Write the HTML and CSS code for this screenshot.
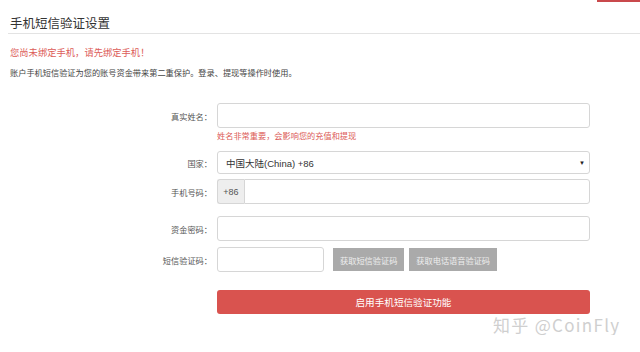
FILE: index.html
```html
<!DOCTYPE html>
<html lang="zh-CN">
<head>
  <meta charset="UTF-8">
  <title>手机短信验证设置</title>
  <link rel="stylesheet" href="styles.css">
</head>
<body>
  <!-- 顶部细条 -->
  <div class="topbar"><span class="topbar-mark"></span></div>
  <div class="panel">
    <h2 class="panel-title">手机短信验证设置</h2>
    <p class="warn-text">您尚未绑定手机，请先绑定手机！</p>
    <p class="desc-text">账户手机短信验证为您的账号资金带来第二重保护。登录、提现等操作时使用。</p>

    <form class="bind-form" onsubmit="return false">
      <div class="form-row row-name">
        <label class="form-label">真实姓名：</label>
        <input class="form-input" type="text">
      </div>
      <div class="form-hint">姓名非常重要，会影响您的充值和提现</div>
      <div class="form-row row-country">
        <label class="form-label">国家：</label>
        <div class="form-select">
          <span>中国大陆(China) +86</span>
          <span class="caret">▼</span>
        </div>
      </div>
      <div class="form-row row-phone">
        <label class="form-label">手机号码：</label>
        <div class="input-group">
          <span class="input-prefix">+86</span>
          <input class="form-input" type="text">
        </div>
      </div>
      <div class="form-row row-fund">
        <label class="form-label">资金密码：</label>
        <input class="form-input" type="password">
      </div>
      <div class="form-row row-sms">
        <label class="form-label">短信验证码：</label>
        <input class="form-input sms-input" type="text">
        <button class="code-btn" type="button">获取短信验证码</button>
        <button class="code-btn" type="button">获取电话语音验证码</button>
      </div>
      <div class="form-row row-submit">
        <span class="form-label"></span>
        <button class="submit-btn" type="submit">启用手机短信验证功能</button>
      </div>
    </form>
    <div class="watermark">知乎 @CoinFly</div>
  </div>
</body>
</html>
```

FILE: styles.css
```css
body {
  margin: 0;
  background: #fff;
  font-family: 'Noto Sans CJK SC', 'Liberation Sans', sans-serif;
  color: #333;
  overflow: hidden;
}
.topbar {
  display: flex;
  justify-content: flex-end;
  height: 2px;
}
.topbar-mark {
  width: 43px;
  background: #c9494c;
}
.panel {
  padding-left: 8px;
}
.panel-title {
  margin: 0;
  padding: 11px 0 0 2px;
  height: 20px;
  line-height: 20px;
  font-size: 12.5px;
  font-weight: 400;
  color: #333;
  border-bottom: 1px solid #e3e3e3;
}
.warn-text {
  margin: 11px 0 0 2px;
  font-size: 9.3px;
  line-height: 14px;
  color: #dc5c58;
}
.desc-text {
  margin: 6px 0 0 2px;
  font-size: 8.2px;
  line-height: 14px;
  color: #444;
}
.bind-form {
  margin-top: 24px;
}
.form-row {
  display: flex;
  align-items: center;
}
.form-label {
  width: 204px;
  flex-shrink: 0;
  padding-right: 5px;
  text-align: right;
  font-size: 8.2px;
  color: #555;
}
.form-input {
  box-sizing: border-box;
  width: 373px;
  height: 25px;
  border: 1px solid #d6d6d6;
  border-radius: 3px;
  padding: 0 8px;
  font-family: inherit;
  font-size: 9px;
  outline: none;
  background: #fff;
}
.form-hint {
  margin: 0 0 0 209px;
  font-size: 8.2px;
  line-height: 14px;
  color: #dc5c58;
}
.row-country { margin-top: 9px; }
.form-select {
  box-sizing: border-box;
  width: 373px;
  height: 23px;
  border: 1px solid #d6d6d6;
  border-radius: 3px;
  padding: 0 4px 0 8px;
  display: flex;
  align-items: center;
  justify-content: space-between;
  font-family: 'Liberation Sans', 'Noto Sans CJK SC', sans-serif;
  font-size: 9.5px;
  color: #333;
}
.caret {
  font-size: 6px;
  color: #222;
}
.row-phone { margin-top: 5px; }
.input-group {
  display: flex;
  width: 373px;
  height: 25px;
}
.input-prefix {
  box-sizing: border-box;
  width: 27px;
  display: flex;
  align-items: center;
  justify-content: center;
  background: #eee;
  border: 1px solid #d6d6d6;
  border-right: none;
  border-radius: 3px 0 0 3px;
  font-family: 'Liberation Sans', sans-serif;
  font-size: 9px;
  color: #555;
}
.input-group .form-input {
  width: 346px;
  border-radius: 0 3px 3px 0;
}
.row-fund { margin-top: 12px; }
.row-sms { margin-top: 6px; }
.sms-input {
  width: 107px;
}
.code-btn {
  height: 23px;
  margin-left: 9px;
  padding: 0 7px;
  border: none;
  background: #aaa;
  color: #eee;
  font-family: inherit;
  font-size: 8.2px;
}
.code-btn + .code-btn { margin-left: 5px; }
.row-submit { margin-top: 18px; }
.submit-btn {
  width: 373px;
  height: 24px;
  border: none;
  border-radius: 3px;
  background: #d9534f;
  color: #fff;
  font-family: inherit;
  font-size: 9.6px;
}
.watermark {
  margin: 1px 0 0 485px;
  line-height: 20px;
  font-size: 17px;
  color: #cfcfcf;
  letter-spacing: 1.3px;
}
```
